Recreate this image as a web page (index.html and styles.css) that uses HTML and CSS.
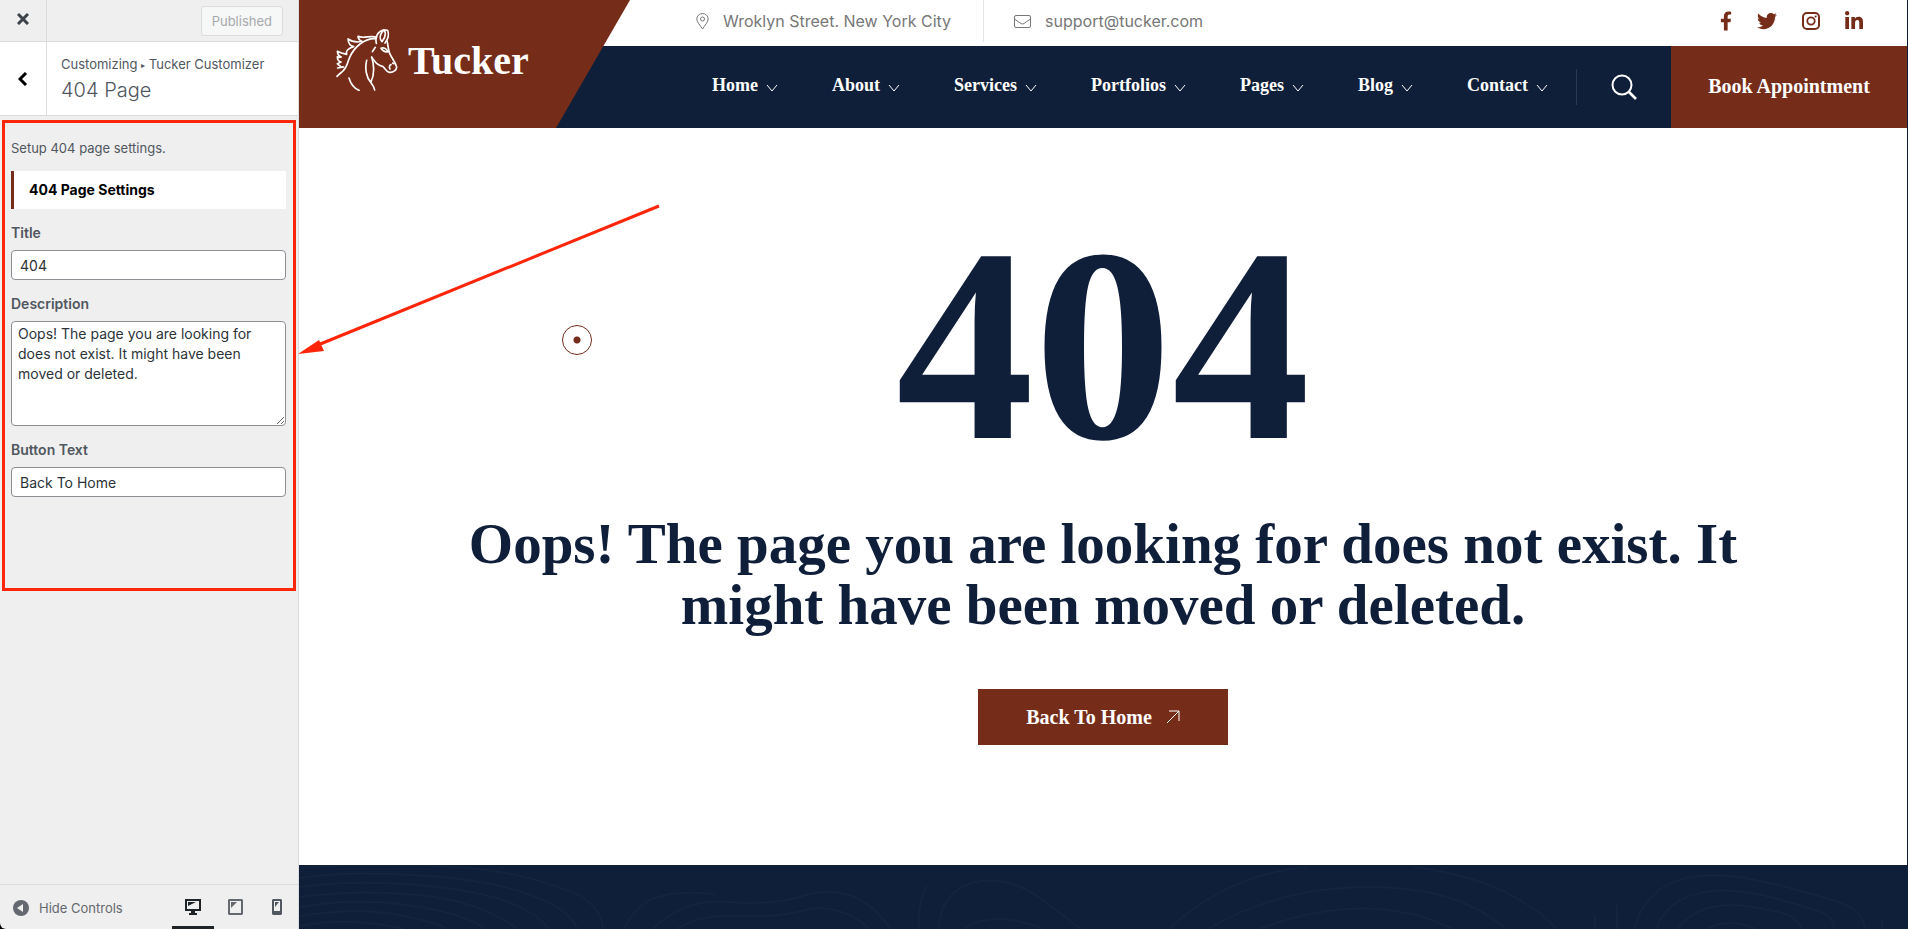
FILE: index.html
```html
<!DOCTYPE html>
<html lang="en">
<head>
    <meta charset="UTF-8">
    <meta name="viewport" content="width=device-width, initial-scale=1.0">
    <title>Customize: Tucker - 404 Page</title>
    <link rel="stylesheet" href="styles.css">
</head>
<body>

<!-- Customizer sidebar -->
<aside class="sidebar">
    <div class="sidebar-top">
        <button class="close-btn" type="button" aria-label="Close">
            <svg width="12" height="12" viewBox="0 0 12 12"><path d="M1 1l10 10M11 1L1 11" stroke="#3c434a" stroke-width="3" fill="none"/></svg>
        </button>
        <button class="publish-btn" type="button" disabled>Published</button>
    </div>
    <div class="section-title">
        <button class="back-btn" type="button" aria-label="Back">
            <svg width="10" height="14" viewBox="0 0 10 14"><path d="M8 1L2 7L8 13" stroke="#000" stroke-width="3" fill="none"/></svg>
        </button>
        <div class="section-text">
            <span class="crumbs">Customizing <small>▸</small> Tucker Customizer</span>
            <h3>404 Page</h3>
        </div>
    </div>

    <form class="controls">
        <p class="section-desc">Setup 404 page settings.</p>
        <h4 class="group-title">404 Page Settings</h4>

        <label for="page-title">Title</label>
        <input id="page-title" type="text" value="404">

        <label for="page-desc">Description</label>
        <textarea id="page-desc">Oops! The page you are looking for does not exist. It might have been moved or deleted.</textarea>

        <label for="page-btn">Button Text</label>
        <input id="page-btn" type="text" value="Back To Home">
    </form>

    <div class="sidebar-footer">
        <button class="collapse-btn" type="button">
            <svg width="16" height="16" viewBox="0 0 16 16"><circle cx="8" cy="8" r="8" fill="#646970"/><path d="M10 4v8L4 8z" fill="#f0f0f0"/></svg>
            Hide Controls
        </button>
        <div class="devices">
            <button class="device active" type="button" aria-label="Desktop">
                <svg width="16" height="16" viewBox="0 0 16 16"><path fill="#1d2327" fill-rule="evenodd" d="M0 0h16v12h-6v2h2v2H4v-2h2v-2H0zM2 2v8h12V2z"/><path fill="#1d2327" d="M3 3h8L3 7z"/></svg>
            </button>
            <button class="device" type="button" aria-label="Tablet">
                <svg width="15" height="16" viewBox="0 0 15 16"><path fill="#646970" fill-rule="evenodd" d="M1 0h13l1 1v14l-1 1H1l-1-1V1zM2 2v12h11V2z"/><path fill="#646970" d="M3 3h6L3 9z"/></svg>
            </button>
            <button class="device" type="button" aria-label="Mobile">
                <svg width="10" height="16" viewBox="0 0 10 16"><path fill="#50575e" fill-rule="evenodd" d="M1 0h8l1 1v14l-1 1H1l-1-1V1zM2 2v10h6V2z"/><path fill="#50575e" d="M3 3h4L3 8z"/></svg>
            </button>
        </div>
    </div>
</aside>

<!-- Site preview -->
<div class="preview">
    <header class="header">
        <a class="logo" href="#">
            <svg width="62" height="62" viewBox="115 86 186 186" fill="none" stroke="#fff" stroke-width="5" stroke-linecap="round" stroke-linejoin="round">
                <path d="M237 111C220 104 196 116 181 108C182 116 187 121 193 123C177 126 163 125 151 116C152 128 159 137 168 139C153 143 143 152 147 162C137 160 127 157 119 153C120 162 124 168 131 170C126 172 122 171 119 169C119 177 123 183 130 185L119 190C124 196 130 200 138 200L120 203"/>
                <path d="M235 115C201 113 170 139 156 171C146 195 149 198 137 211C131 217 124 221 118 228"/>
                <path d="M236 129C232 109 240 94 259 88C265 98 264 111 253 124C245 116 246 103 256 92"/>
                <path d="M260 89L270 90C275 104 271 117 262 128"/>
                <path d="M268 122C272 136 271 147 276 159C281 171 292 184 296 197C300 209 285 217 275 216C265 214 263 205 256 199C246 196 236 192 230 181L222 171"/>
                <path d="M250 144C258 140 267 145 271 154C264 156 256 153 250 144M233 141L224 154M280 193C275 194 274 201 277 206M289 190L285 188"/>
                <path d="M222 170C229 192 231 220 220 245M207 180C201 205 206 232 220 247C225 253 229 260 231 269M154 233C159 250 169 264 184 270"/>
            </svg>
            <span>Tucker</span>
        </a>
        <div class="header-right">
            <div class="topbar">
                <span class="info">
                    <svg width="13" height="17" viewBox="0 0 13 17" fill="none" stroke="#777"><path d="M6.500 16C4 12 .8 9 .8 6a5.700 5.500 0 0 1 11.400 0C12.200 9 9 12 6.500 16z"/><circle cx="6.500" cy="6" r="2"/></svg>
                    Wroklyn Street. New York City
                </span>
                <span class="info info-mail">
                    <svg width="17" height="13" viewBox="0 0 17 13" fill="none" stroke="#777"><rect x=".5" y=".5" width="16" height="12" rx="1.500"/><path d="M.5 4l6.500 4.500q1.500 1 3 0L16.500 4"/></svg>
                    support@tucker.com
                </span>
                <div class="social">
                    <a href="#" aria-label="Facebook"><svg width="12" height="20" viewBox="0 0 320 512"><path d="M279 288l14-93h-89v-60c0-25 12-50 52-50h41V7s-37-7-72-7c-73 0-121 44-121 125v70H23v93h81v224h100V288z"/></svg></a>
                    <a href="#" aria-label="Twitter"><svg width="20" height="20" viewBox="0 0 512 512"><path d="M459 152c1 4 1 9 1 13 0 139-106 299-299 299-59 0-115-17-161-47 8 1 16 1 25 1 49 0 94-16 130-45-46-1-85-31-98-73 7 1 13 2 20 2 9 0 19-2 28-4-48-10-84-52-84-103v-1c14 8 30 13 47 13C40 189 21 157 21 120c0-20 5-38 14-53 52 64 129 106 216 110-2-8-3-16-3-24 0-58 47-105 105-105 30 0 58 13 77 33 24-5 46-13 67-25-8 24-24 45-46 58 21-2 42-8 60-16-14 21-32 39-52 54z"/></svg></a>
                    <a href="#" aria-label="Instagram"><svg width="18" height="20" viewBox="0 0 18 20"><rect x="1" y="2" width="16" height="16" rx="4" fill="none" stroke="#752d1a" stroke-width="2"/><circle cx="9" cy="10" r="3.700" fill="none" stroke="#752d1a" stroke-width="1.800"/><circle cx="13.600" cy="5.500" r="1.100"/></svg></a>
                    <a href="#" aria-label="LinkedIn"><svg width="18" height="20" viewBox="0 0 448 498"><path d="M100 448H7V149h93zM54 108C24 108 0 83 0 54a54 54 0 0 1 108 0c0 29-24 54-54 54zM448 448h-93V302c0-34-1-79-48-79-49 0-56 38-56 77v148h-93V149h89v41h1c13-24 43-48 88-48 94 0 112 62 112 142z"/></svg></a>
                </div>
            </div>
            <div class="navbar">
                <nav class="menu">
                    <a href="#">Home <svg class="chev" viewBox="0 0 12 8"><path d="M1 1l5 6 5-6"/></svg></a>
                    <a href="#">About <svg class="chev" viewBox="0 0 12 8"><path d="M1 1l5 6 5-6"/></svg></a>
                    <a href="#">Services <svg class="chev" viewBox="0 0 12 8"><path d="M1 1l5 6 5-6"/></svg></a>
                    <a href="#">Portfolios <svg class="chev" viewBox="0 0 12 8"><path d="M1 1l5 6 5-6"/></svg></a>
                    <a href="#">Pages <svg class="chev" viewBox="0 0 12 8"><path d="M1 1l5 6 5-6"/></svg></a>
                    <a href="#">Blog <svg class="chev" viewBox="0 0 12 8"><path d="M1 1l5 6 5-6"/></svg></a>
                    <a href="#">Contact <svg class="chev" viewBox="0 0 12 8"><path d="M1 1l5 6 5-6"/></svg></a>
                </nav>
                <button class="search-btn" type="button" aria-label="Search">
                    <svg width="26" height="26" viewBox="0 0 26 26" fill="none" stroke="#fff" stroke-width="2"><circle cx="11" cy="11" r="9.500"/><path d="M17.500 17.500L25 25" stroke-width="2.600"/></svg>
                </button>
                <a class="book-btn" href="#">Book Appointment</a>
            </div>
        </div>
    </header>

    <main class="error-page">
        <h1>404</h1>
        <h2>Oops! The page you are looking for does not exist. It might have been moved or deleted.</h2>
        <a class="home-btn" href="#">Back To Home
            <svg width="14" height="14" viewBox="0 0 14 14" fill="none" stroke="#fff"><path d="M1 13L13 1M3 1h10v10"/></svg>
        </a>
    </main>

    <footer class="footer">
        <!-- contour lines -->
        <svg width="1608" height="64" viewBox="0 0 1608 64" fill="none" stroke="#13243d" stroke-width="2">
            <path d="M0 3Q60-2 140 1T280 30Q303 44 304 64M0 13Q50 5 130 11T250 38Q272 48 278 64M0 22Q60 14 130 21T230 47Q244 55 249 64M0 32Q60 24 120 30T219 64M0 42Q60 32 115 41T186 64M0 51Q60 42 100 50T148 64M0 61Q50 51 105 64"/>
            <path d="M325 64C340 32 365 24 416 29M354 64Q385 33 430 37T510 29Q562 18 591 64M378 64Q400 49 440 51T515 43Q550 43 570 64"/>
            <path d="M620 64Q618 40 628 21M640 64C640 10 705 0 750 40L782 64M664 64Q695 44 745 64"/>
            <path d="M870 64Q930 8 1010 2M1115 2Q1210 14 1258 64M909 64Q980 22 1070 22T1207 64M960 64Q1070 23 1154 64"/>
            <path d="M1296 64v-14M1318 64V40M1335 64C1350 10 1400 0 1475 19S1563 42 1566 64M1357 64C1372 24 1420 18 1475 33S1532 48 1535 64M1379 64C1400 34 1440 38 1475 46Q1498 50 1503 64M1407 64Q1430 52 1457 64M1583 64v-8"/>
        </svg>
    </footer>

    <span class="cursor"></span>
</div>

<!-- Annotation over the controls -->
<div class="mark-box"></div>
<svg class="mark-arrow" width="364" height="152" viewBox="0 0 364 152">
    <path d="M15 143L361 2" stroke="#fd2609" stroke-width="3" fill="none"/>
    <path d="M0 150L21 136L26 147z" fill="#fd2609"/>
</svg>

</body>
</html>
```

FILE: styles.css
```css
* {
    box-sizing: border-box;
}
body {
    margin: 0;
    display: flex;
    height: 100vh;
    overflow: hidden;
    position: relative;
    background-color: #fff;
    font-family: Inter, sans-serif;
}
button {
    font-family: inherit;
    background: none;
    border: none;
    padding: 0;
    cursor: pointer;
}
a {
    text-decoration: none;
    color: inherit;
}
svg {
    display: block;
    flex: none;
}

/* Sidebar */
.sidebar {
    width: 299px;
    flex: none;
    display: flex;
    flex-direction: column;
    background-color: #efefef;
    border-right: 1px solid #dcdcde;
    border-bottom-left-radius: 6px;
    box-shadow: -8px 8px 0 #000;
    color: #50575e;
    font-size: 13px;
}
.sidebar-top {
    display: flex;
    justify-content: space-between;
    align-items: center;
    height: 42px;
    padding-right: 15px;
    border-bottom: 1px solid #dcdcde;
}
.close-btn,
.back-btn {
    width: 47px;
    align-self: stretch;
    display: flex;
    align-items: center;
    justify-content: center;
    border-right: 1px solid #dcdcde;
}
.close-btn {
    padding-bottom: 3px;
}
.publish-btn {
    height: 30px;
    padding: 0 10px;
    font-size: 13px;
    color: #a7aaad;
    background-color: #f6f7f7;
    border: 1px solid #dcdcde;
    border-radius: 3px;
}
.section-title {
    display: flex;
    background-color: #fff;
    border-bottom: 1px solid #dcdcde;
}
.section-text {
    padding: 12px 14px;
}
.crumbs {
    display: block;
    line-height: 20px;
}
.crumbs small {
    font-size: 8px;
    vertical-align: middle;
}
h3 {
    margin: 3px 0 0;
    font-size: 20px;
    font-weight: 300;
    line-height: 25px;
}
.controls {
    flex: 1;
    padding: 22px 12px 0 11px;
    display: flex;
    flex-direction: column;
}
.section-desc {
    margin: 0 0 13px;
    line-height: 20px;
}
.group-title {
    margin: 0 0 14px;
    padding: 0 15px;
    background-color: #fff;
    border-left: 3px solid #752d1a;
    color: #000;
    font-size: 14px;
    line-height: 38px;
}
.controls label {
    margin-bottom: 7px;
    font-size: 14px;
    font-weight: 600;
    line-height: 20px;
}
.controls input,
.controls textarea {
    width: 100%;
    margin: 0 0 14px;
    border: 1px solid #8c8f94;
    border-radius: 4px;
    background-color: #fff;
    color: #2c3338;
    font-family: inherit;
    font-size: 14px;
}
.controls input {
    height: 30px;
    padding: 0 8px;
}
.controls textarea {
    height: 105px;
    padding: 2px 6px;
    line-height: 20px;
    resize: vertical;
}
.sidebar-footer {
    display: flex;
    justify-content: space-between;
    height: 45px;
    border-top: 1px solid #dcdcde;
}
.collapse-btn {
    display: flex;
    align-items: center;
    gap: 10px;
    padding: 2px 0 0 13px;
    font-size: 13px;
    color: #646970;
}
.devices {
    display: flex;
}
.device {
    width: 42px;
    padding-top: 3px;
    display: flex;
    align-items: center;
    justify-content: center;
    border-bottom: 3px solid transparent;
}
.device.active {
    border-bottom-color: #1d2327;
}

/* Preview */
.preview {
    flex: 1;
    min-width: 0;
    display: flex;
    flex-direction: column;
    position: relative;
    border-right: 1px solid #101f39;
    font-family: "Liberation Serif", serif;
    font-weight: 700;
}
.header {
    display: flex;
    height: 128px;
    background: linear-gradient(#fff 46px, #101f39 46px);
}
.logo {
    width: 331px;
    flex: none;
    display: flex;
    align-items: center;
    gap: 10px;
    padding: 0 0 8px 37px;
    background-color: #752d1a;
    clip-path: polygon(0 0, 100% 0, calc(100% - 74px) 100%, 0 100%);
    color: #fff;
    font-size: 40px;
}
.header-right {
    flex: 1;
}
.topbar {
    height: 46px;
    padding: 0 44px 4px 66px;
    display: flex;
    align-items: stretch;
    font-family: Inter, sans-serif;
    font-size: 16px;
    font-weight: 400;
    color: #777;
}
.info {
    display: flex;
    align-items: center;
    gap: 14px;
}
.info-mail {
    margin-left: 32px;
    padding-left: 30px;
    border-left: 1px solid #e5e5e5;
}
.social {
    margin-left: auto;
    display: flex;
    align-items: center;
    gap: 25px;
    fill: #752d1a;
}
.navbar {
    display: flex;
    justify-content: flex-end;
    align-items: center;
    height: 82px;
    color: #fff;
}
.menu {
    display: flex;
    gap: 54px;
    padding: 0 28px 3px 0;
    font-size: 18px;
}
.menu a {
    display: flex;
    align-items: center;
    gap: 8px;
}
.chev {
    width: 12px;
    height: 8px;
    margin-top: 4px;
    fill: none;
    stroke: #fff;
    stroke-width: 1px;
}
.search-btn {
    width: 95px;
    height: 36px;
    display: flex;
    align-items: center;
    justify-content: center;
    border-left: 1px solid #2b3850;
}
.book-btn {
    width: 236px;
    align-self: stretch;
    display: flex;
    align-items: center;
    justify-content: center;
    padding-bottom: 2px;
    background-color: #752d1a;
    font-size: 20px;
}
.error-page {
    padding: 79px 160px 120px;
    display: flex;
    flex-direction: column;
    align-items: center;
    color: #101f39;
    text-align: center;
}
h1 {
    margin: 0 0 30px;
    font-size: 276px;
    line-height: 276px;
}
h2 {
    margin: 0 0 54px;
    font-size: 57px;
    line-height: 61px;
}
.home-btn {
    display: flex;
    align-items: center;
    gap: 14px;
    height: 56px;
    padding: 0 48px;
    background-color: #752d1a;
    color: #fff;
    font-size: 20px;
}
.footer {
    flex: 1;
    overflow: hidden;
    background-color: #101f39;
}
.cursor {
    position: absolute;
    left: 263px;
    top: 325px;
    width: 30px;
    height: 30px;
    border: 1px solid #752d1a;
    border-radius: 50%;
    background: radial-gradient(circle, #752d1a 3px, transparent 4px);
}

/* Annotation */
.mark-box {
    position: absolute;
    left: 2px;
    top: 120px;
    width: 294px;
    height: 471px;
    border: 3px solid #fd2609;
    pointer-events: none;
}
.mark-arrow {
    position: absolute;
    left: 298px;
    top: 204px;
    pointer-events: none;
}
```
